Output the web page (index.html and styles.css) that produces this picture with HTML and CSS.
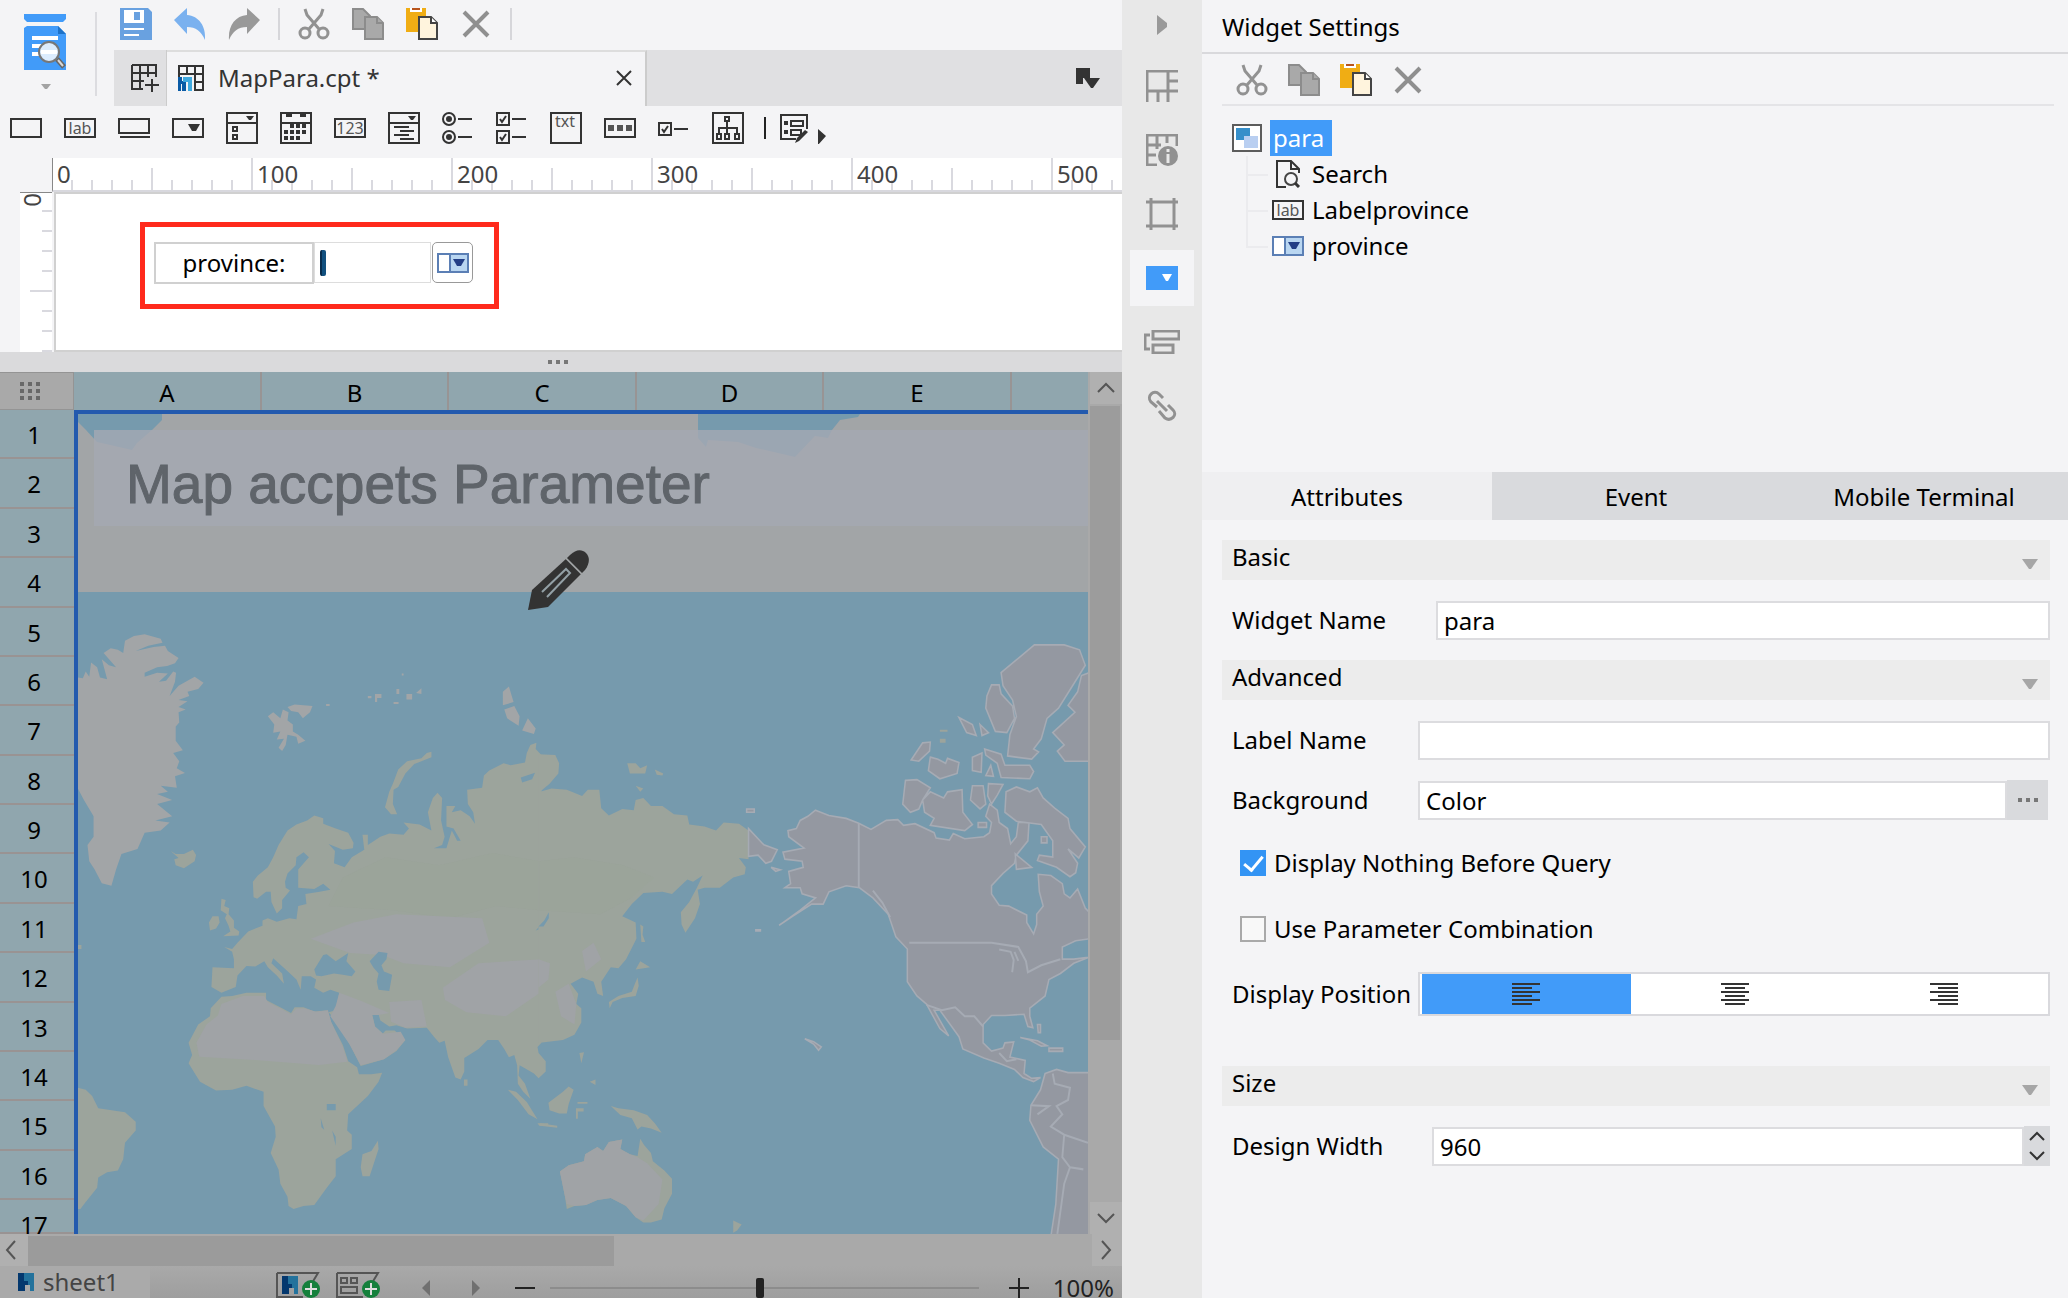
FILE: index.html
```html
<!DOCTYPE html>
<html lang="en">
<head>
<meta charset="utf-8">
<title>MapPara.cpt</title>
<link rel="stylesheet" href="styles.css">
</head>
<body>
<svg class="defs" aria-hidden="true">
  <symbol id="i-cut" viewBox="0 0 32 32"><g fill="none" stroke="#929292" stroke-width="3"><path d="M7 1l2 6 12 14M25 1l-2 6-12 14"/><circle cx="7" cy="25" r="5"/><circle cx="25" cy="25" r="5"/></g></symbol>
  <symbol id="i-copy" viewBox="0 0 32 32"><g fill="#a9a9a9" stroke="#8c8c8c" stroke-width="2"><path d="M1 1h10l7 7v13H1z"/><path d="M13 9h12l6 6v16H13z"/><path d="M25 9v6h6"/></g></symbol>
  <symbol id="i-paste" viewBox="0 0 32 32"><path d="M0 0h20v24H0z" fill="#f0ad14"/><path d="M4 0h12v4H4z" fill="#fff"/><path d="M6 0h8v2H6z" fill="#b8541c"/><path d="M13 9h12l6 6v16H13z" fill="#fff4dd" stroke="#444" stroke-width="2"/><path d="M25 9v6h6" fill="#fff" stroke="#444" stroke-width="2"/></symbol>
  <symbol id="i-del" viewBox="0 0 32 32"><path d="M4 4l24 24M28 4L4 28" stroke="#8f8f8f" stroke-width="4" fill="none"/></symbol>
  <symbol id="i-combo" viewBox="0 0 32 20"><path d="M1 1h30v18H1z" fill="#fff" stroke="#5b7fb5" stroke-width="2"/><path d="M13 2h17v16H13z" fill="#b9d6f1"/><path d="M13 1v18" stroke="#5b7fb5" stroke-width="2"/><path d="M16 6h12l-4 7h-4z" fill="#233e86"/></symbol>
  <symbol id="i-down" viewBox="0 0 16 10"><path d="M0 0h16L9 10H7z" fill="#a6a6a6"/></symbol>
</svg>

<div class="app">
  <main class="work">
    <header class="top">
      <button class="preview" aria-label="Preview">
        <svg width="44" height="80" viewBox="0 0 44 80"><path d="M1 0h42v5l-3 3H4L1 5z" fill="#419bf9"/><path d="M1 14l3-2h31l8 8v36H1z" fill="#419bf9"/><path d="M35 12l8 8h-8z" fill="#1d72c8"/><path d="M9 22h26v4H9zM9 30h12v4H9zM9 38h9v4H9z" fill="#fff"/><path d="M34 45l7 8" stroke="#666" stroke-width="5"/><path d="M35 46l5 6" stroke="#d8d8d8" stroke-width="2"/><circle cx="26" cy="38" r="10" fill="#dcecfd" stroke="#777" stroke-width="2"/><path d="M18 36h16v4H18z" fill="#fff"/><path d="M18 70h10l-4 5h-2z" fill="#a3a3a3"/></svg>
      </button>
      <div class="bars">
        <div class="tools">
          <button aria-label="Save"><svg width="32" height="32" viewBox="0 0 32 32"><path d="M0 0h28l4 4v28H0z" fill="#69a1e0"/><path d="M4 2h20v13H4z" fill="#fff"/><path d="M14 4h6v8h-6z" fill="#69a1e0"/><path d="M4 20h20v2H4zM4 26h15v2H4z" fill="#fff"/></svg></button>
          <button aria-label="Undo"><svg width="32" height="32" viewBox="0 0 32 32"><path d="M0 12L13 0v7c12 1 19 11 18 25-4-9-9-13-18-13v7z" fill="#7ab1ef"/></svg></button>
          <button aria-label="Redo"><svg width="32" height="32" viewBox="0 0 32 32"><path d="M32 12L19 0v7C7 8 0 18 1 32c4-9 9-13 18-13v7z" fill="#999"/></svg></button>
          <i class="sep"></i>
          <button aria-label="Cut"><svg width="32" height="32"><use href="#i-cut"/></svg></button>
          <button aria-label="Copy"><svg width="32" height="32"><use href="#i-copy"/></svg></button>
          <button aria-label="Paste"><svg width="32" height="32"><use href="#i-paste"/></svg></button>
          <button aria-label="Delete"><svg width="32" height="32"><use href="#i-del"/></svg></button>
          <i class="sep"></i>
        </div>
        <div class="docs">
          <button class="newdoc" aria-label="New"><svg width="30" height="28" viewBox="0 0 30 28"><path d="M1 1h24v12M1 1v24h11M1 9h24M1 17h12M9 1v24M17 1v12M21 15v13M14 21h14" fill="none" stroke="#333" stroke-width="2"/></svg></button>
          <div class="doc">
            <svg width="26" height="26" viewBox="0 0 26 26"><path d="M1 12V1h24v24h-8V1M9 1v8M1 9h24M17 17h8" fill="none" stroke="#333" stroke-width="2"/><path d="M0 12h4v4h4v10H4v-7H3v7H0z" fill="#0a5ba6"/><path d="M5 12h9v14h-4V17H5z" fill="#3fa9df"/></svg>
            <span class="docname">MapPara.cpt *</span>
            <button aria-label="Close"><svg width="16" height="16" viewBox="0 0 16 16"><path d="M1 1l14 14M15 1L1 15" stroke="#333" stroke-width="2"/></svg></button>
          </div>
          <button class="doclist" aria-label="Open documents"><svg width="24" height="20" viewBox="0 0 24 20"><path d="M0 0h14v10h-7v6H0z" fill="#333"/><path d="M8 10h16l-7 10h-2z" fill="#333"/></svg></button>
        </div>
      </div>
    </header>

    <div class="palette">
      <button aria-label="Text box"><svg viewBox="0 0 32 32"><path d="M1 7h30v18H1z"/></svg></button>
      <button aria-label="Label"><svg viewBox="0 0 32 32"><path d="M1 7h30v18H1z"/><text x="16" y="22">lab</text></svg></button>
      <button aria-label="Button"><svg viewBox="0 0 32 32"><path d="M1 7h30v14H1zM2 25h30"/></svg></button>
      <button aria-label="Drop-down"><svg viewBox="0 0 32 32"><path d="M1 7h30v18H1z"/><path class="f" d="M16 12h12l-4 7h-4z"/></svg></button>
      <button aria-label="Combo check box"><svg viewBox="0 0 32 32"><path d="M1 1h30v30H1zM1 11h30M7 15h4v4H7zM7 23h4v4H7z"/><path class="f" d="M20 4h8l-3 4h-2z"/></svg></button>
      <button aria-label="Date"><svg viewBox="0 0 32 32"><path d="M1 1h30v30H1zM1 11h30"/><path d="M6 3h6M20 3h6M10 14h4M16 14h4M22 14h4M4 20h4M10 20h4M16 20h4M22 20h4M4 26h4M10 26h4M16 26h4" stroke-width="4"/></svg></button>
      <button aria-label="Number"><svg viewBox="0 0 32 32"><path d="M1 7h30v18H1z"/><text x="16" y="22">123</text></svg></button>
      <button aria-label="Tree drop-down"><svg viewBox="0 0 32 32"><path d="M1 1h30v30H1zM1 11h30M6 15h15M12 19h14M6 23h15M12 27h14"/><path class="f" d="M20 4h8l-3 4h-2z"/></svg></button>
      <button aria-label="Radio group"><svg viewBox="0 0 32 32"><circle cx="7" cy="7" r="6"/><circle cx="7" cy="25" r="6"/><circle class="f" cx="7" cy="7" r="3"/><circle class="f" cx="7" cy="25" r="3"/><path d="M16 7h14M16 25h14"/></svg></button>
      <button aria-label="Check box group"><svg viewBox="0 0 32 32"><path d="M1 1h12v12H1zM1 19h12v12H1zM4 7l2 3 4-6M4 25l2 3 4-6M16 7h14M16 25h14"/></svg></button>
      <button aria-label="Text area"><svg viewBox="0 0 32 32"><path d="M1 1h30v30H1z"/><text x="15" y="15">txt</text></svg></button>
      <button aria-label="Password"><svg viewBox="0 0 32 32"><path d="M1 7h30v18H1z"/><path d="M4 16h6M13 16h6M22 16h6" stroke-width="6" stroke="#555"/></svg></button>
      <button aria-label="Check box"><svg viewBox="0 0 32 32"><path d="M1 11h12v12H1zM4 17l2 3 4-6M16 17h14"/></svg></button>
      <button aria-label="Tree"><svg viewBox="0 0 32 32"><path d="M1 1h30v30H1zM13 5h4v4h-4zM15 9v14M7 22v-6h18v6M5 22h4v5H5zM13 22h4v5h-4zM23 22h4v5h-4z"/></svg></button>
      <i class="bar"></i>
      <button class="custom" aria-label="Custom widget"><svg viewBox="0 0 46 32"><path d="M16 27H1V3h26v14M11 9h12v5H11zM11 18h10v5H11z"/><path class="f" d="M4 9h4v4H4zM4 18h4v4H4zM38 17l8 7-8 9zM15 31l2-5 8-8 3 2-9 9z"/></svg></button>
    </div>

    <section class="para">
      <div class="hruler"><span>0</span><span>100</span><span>200</span><span>300</span><span>400</span><span>500</span></div>
      <div class="vruler"><span>0</span></div>
      <div class="canvas">
        <div class="mark">
          <label for="prov">province:</label>
          <div class="provbox"><input id="prov"><i class="caret"></i></div>
          <button aria-label="Open list"><svg width="32" height="20"><use href="#i-combo"/></svg></button>
        </div>
      </div>
    </section>
    <div class="split"><i></i><i></i><i></i></div>

    <section class="sheet">
      <div class="corner"><svg width="20" height="18" viewBox="0 0 20 18"><path d="M2 0v18M10 0v18M18 0v18" stroke="#686868" stroke-width="4" stroke-dasharray="4 3"/></svg></div>
      <div class="cols"><span>A</span><span>B</span><span>C</span><span>D</span><span>E</span><span></span></div>
      <div class="rows"><span>1</span><span>2</span><span>3</span><span>4</span><span>5</span><span>6</span><span>7</span><span>8</span><span>9</span><span>10</span><span>11</span><span>12</span><span>13</span><span>14</span><span>15</span><span>16</span><span>17</span></div>
      <div class="map">
        <svg class="world" viewBox="78 414 1010 820" preserveAspectRatio="xMinYMin slice">
          <path class="ice" d="M78 414h1010v178H78z"/>
          <path class="sea" d="M78 414h84v6l-10 10-15 13-5 7-35-8-11-12-8-8zM698 414h162l-2 3-18 3-8 10-4 8-13-2-20 21-17-4-22-5-18-6-30-2-2 7-8-9z"/>
          <g transform="translate(0 600) scale(.35714 .40816)">
            <path class="ice" d="M218 190L232 192 240 175 250 188 255 153 272 165 280 190 300 194 285 145 305 160 325 165 290 130 310 118 330 122 345 130 350 100 375 88 405 84 450 95 455 105 415 112 380 125 430 115 462 112 470 125 500 142 490 155 468 162 440 165 405 178 405 188 440 178 470 180 445 200 465 198 485 175 493 178 490 200 475 235 500 210 545 188 570 203 555 218 525 225 530 235 500 245 525 248 500 262 520 268 500 275 502 300 492 310 492 345 512 368 485 375 502 395 495 412 518 424 490 432 495 460 450 455 470 470 440 475 482 490 440 500 482 530 435 540 475 545 450 565 405 570 385 610 340 622 325 660 318 682 312 700 285 694 265 660 250 640 245 600 262 580 262 530 235 490 218 462Z"/>
            <path class="ice" d="M750 285L765 275 785 290 792 268 808 275 805 295 820 305 820 322 835 330 855 345 835 352 830 335 805 330 800 355 790 370 780 362 795 340 775 342 785 322 765 325 768 305ZM805 262L825 256 875 260 868 275 848 290 835 275 815 272ZM1030 235h10v6h-10zM1050 230h18v10h-12v10h-6zM1110 218h8v12h-8zM1138 230h16v14h-16zM1165 228l15-12v14zM1125 180h5v5h-5zM1102 250h14v5h-14zM1408 225L1425 212 1438 250 1408 258ZM1412 268L1440 260 1455 285 1452 308 1420 290ZM1462 320L1478 290 1500 315 1495 328ZM913 255h10v5h-10z"/>
            <path class="land" d="M1208 372L1208 385 1160 402 1135 425 1115 458 1102 465 1100 500 1112 525 1095 525 1078 508 1090 470 1100 450 1115 415 1140 395 1180 388 1195 375ZM478 615L492 622 515 622 540 612 549 625 545 640 515 657 492 650 488 635 500 632ZM620 732L632 735 628 750 642 755 640 770 655 785 655 803 670 812 668 822 625 824 645 812 640 798 630 780 635 770 618 760ZM585 790L595 775 612 775 615 790 605 805 588 810ZM218 845h10v10h-10z"/>
            <path class="land" d="M628 850L650 855 665 840 695 812 735 798 735 785 750 780 775 788 810 780 830 782 835 750 858 745 855 720 895 715 925 710 905 695 880 708 835 705 835 660 865 630 850 618 830 630 828 650 805 670 798 690 800 705 812 712 790 735 790 755 775 768 760 740 758 715 745 715 720 732 710 728 708 690 722 675 750 655 765 630 780 600 805 565 830 550 860 540 880 528 905 535 905 548 940 560 975 570 990 595 988 608 960 612 920 598 938 615 935 645 965 655 985 630 1020 612 1015 575 1030 575 1030 600 1065 580 1090 572 1130 575 1145 560 1130 545 1175 550 1208 565 1198 520 1212 485 1225 472 1238 485 1235 540 1245 580 1238 600 1215 608 1250 608 1265 565 1280 590 1290 590 1270 560 1250 555 1250 505 1275 505 1265 520 1290 515 1315 530 1330 548 1325 520 1310 500 1308 465 1350 460 1355 430 1370 418 1410 400 1430 405 1470 398 1475 375 1485 355 1502 350 1500 365 1516 380 1516 1085 1505 1095 1508 1110 1528 1130 1528 1155 1508 1172 1495 1160 1455 1140 1452 1165 1470 1185 1485 1222 1465 1205 1450 1185 1448 1140 1440 1115 1425 1120 1412 1100 1395 1078 1365 1078 1340 1100 1300 1122 1300 1155 1290 1175 1275 1170 1255 1120 1245 1080 1230 1085 1215 1070 1195 1048 1140 1050 1110 1042 1090 1045 1065 1030 1060 1015 1042 1015 1050 1045 1072 1062 1080 1055 1105 1055 1135 1078 1110 1105 1075 1125 1010 1142 980 1090 950 1040 920 1010 940 1005 950 962 925 955 905 962 880 950 885 930 870 922 845 922 842 955 830 930 800 905 765 878 760 890 790 915 795 940 775 920 750 900 740 885 715 898 690 897 665 920 660 948 620 962 592 948 595 900 655 902 655 880 650 862Z"/>
            <path class="green" d="M960 680l120-50 150 20 150-30 130 20v120l-120-10-130 30-160-20-180-10z"/>
            <path class="dry" d="M950 962l60 20 80 30-30 5-18 0 8 28 22 18 50-5 13 20-25 25-35 22-65 15-30-50-55-70 15-25zM870 830l120-40 120-20 240 10 20 60-110 60-130-10-60-20-90-5zM1240 950l100-60 176-10v80l-100 60-110-10-60-30zM1090 985l90-5 15 65-60 3-40-15z"/>
            <path class="sea" d="M880 905L905 870 915 868 940 885 975 865 970 885 995 910 985 922 960 918 935 915 900 922 885 920ZM1035 885L1060 862 1085 865 1082 880 1068 895 1075 910 1098 918 1090 958 1060 955 1055 935 1060 915 1045 900ZM1500 810L1520 790 1540 768 1535 785 1515 805ZM1458 435l40-12-8 16-28 8z"/>
            <path class="land" d="M620 972L650 970 690 962 745 962 745 980 790 1000 815 1012 825 998 850 998 880 1008 918 1005 925 1030 960 1090 975 1130 1000 1145 1005 1162 1040 1162 1070 1158 1060 1180 1030 1215 975 1260 972 1300 985 1310 985 1345 940 1370 940 1412 915 1440 880 1482 850 1485 822 1492 808 1485 805 1462 785 1430 780 1395 758 1355 772 1315 770 1290 738 1240 738 1205 690 1190 650 1200 605 1202 560 1180 528 1135 538 1115 528 1085 555 1040 588 1020 590 1000Z"/>
            <path class="dry" d="M620 990l60-20h60l10 15 40 18 25 12 15-14h25l30 8 33-4 10 30 32 60 13 36-80 8-180-12-155-8-8-34 28-45 32-22z"/>
            <path class="sea" d="M915 1235h25v15h-25zM898 1270l10 28-8-6zM930 1300l10 15v22z"/>
            <path class="land" d="M1058 1325L1060 1345 1035 1412 1015 1412 1010 1390 1015 1358 1040 1350ZM218 1195L240 1200 258 1215 275 1245 350 1255 380 1278 380 1300 350 1330 345 1370 330 1398 300 1402 275 1415 272 1440 240 1475 225 1492 218 1492ZM1299 1175h10v15h-10zM1422 1200L1445 1205 1475 1230 1505 1272 1480 1260 1450 1225ZM1505 1282l30 0 0 6-25 0z"/>
          </g>
          <g transform="translate(540 600) scale(.38265 .40816)">
            <path class="land" d="M-4 378L40 380 50 400 48 425 25 450 0 470 30 462 70 465 110 480 125 465 155 465 160 510 180 528 215 512 245 515 250 490 270 485 290 505 320 505 350 525 385 528 390 550 430 555 460 565 480 545 520 548 545 565 545 635 520 632 538 655 535 672 505 680 470 705 430 705 412 710 418 745 405 780 380 815 370 795 368 765 390 740 410 705 425 675 400 690 385 685 345 720 320 715 270 718 240 745 215 775 250 790 252 830 225 880 205 902 185 900 160 935 165 970 150 965 140 935 110 925 80 940 100 965 95 990 108 1000 108 1035 90 1065 60 1078 0 1085 -4 1085Z"/>
            <path class="green" d="M-2 640l90-10 130 20 80 30-60 50-80 40-160-10z"/>
            <path class="dry" d="M40 960l35-20 20 50-5 50-35-20zM110 860l30-20 20 40-40 30zM-4 880l30 10-4 40-26 20z"/>
            <path class="sea" d="M-4 800l15-15 12-20v15l-14 20z"/>
            <path class="land" d="M262 795L270 800 268 820 275 838 265 838ZM262 885L288 900 250 905ZM255 925L258 945 250 970 215 975 190 985 182 1000 180 985 205 970 240 960 248 940ZM228 400L250 400 262 412 280 405 275 425 235 425ZM300 415L322 425 320 430 305 428ZM250 455L270 462 262 470ZM103 1110L115 1108 108 1135ZM130 1180L145 1175 145 1188ZM22 1232L60 1205 75 1192 88 1200 75 1235 70 1258 50 1258 25 1250ZM94 1245h20v8h-15v18h-5zM98 1230h26v4h-26zM185 1240L205 1245 245 1250 280 1262 300 1282 318 1305 290 1295 265 1290 255 1297 240 1270 210 1262ZM0 1282L45 1288 45 1293 0 1288ZM505 1520L527 1530 515 1545 505 1550ZM1045 318h20v5h-20zM1045 340h15v10h-15z"/>
            <path class="land" d="M52 1400L75 1385 115 1375 118 1358 150 1340 165 1350 180 1328 215 1322 210 1345 235 1358 255 1362 262 1320 272 1335 290 1355 295 1375 325 1398 345 1418 345 1455 325 1490 318 1518 290 1525 270 1525 250 1512 225 1485 185 1465 150 1470 120 1482 90 1485 70 1492 65 1460Z"/>
            <path class="dry" d="M52 1400L75 1385 115 1375 118 1358 150 1340 165 1350 180 1328 215 1322 210 1345 235 1358 255 1365 280 1380 320 1420 310 1480 270 1520 250 1512 225 1485 185 1465 150 1470 120 1482 90 1485 70 1480 65 1460Z"/>
            <path class="us" d="M545 560L585 600 620 612 605 640 590 645 570 625 545 628ZM540 512h20v8h-20zM604 655l24 6-12 4zM692 1075L715 1082 735 1095 728 1103 715 1088ZM564 808h12v3h-12zM720 515L755 528 800 535 833 547 865 562 905 540 935 538 950 552 980 548 1030 570 1035 583 1070 588 1080 572 1110 585 1160 580 1175 570 1180 545 1165 530 1175 500 1195 515 1200 545 1222 560 1230 597 1245 580 1250 545 1278 545 1275 590 1245 625 1240 645 1210 670 1180 700 1180 720 1200 748 1225 750 1272 772 1272 790 1290 818 1298 795 1298 770 1315 750 1305 715 1302 672 1335 675 1365 695 1370 720 1385 730 1405 708 1425 755 1436 765 1436 830 1400 835 1365 850 1365 880 1395 880 1436 875 1395 890 1360 915 1330 930 1320 970 1280 1000 1280 1020 1288 1048 1275 1045 1265 1015 1215 1018 1180 1018 1158 1040 1158 1085 1180 1105 1210 1098 1215 1085 1238 1083 1228 1120 1268 1128 1265 1160 1285 1172 1308 1170 1290 1180 1262 1170 1240 1150 1200 1135 1160 1122 1105 1100 1095 1070 1045 1005 1030 1005 1068 1068 1045 1050 1010 990 985 970 960 935 960 855 930 825 910 770 870 730 835 705 800 700 755 715 740 745 710 745 660 775 625 797 680 760 720 730 685 720 680 705 640 705 655 695 650 665 688 655 685 640 640 635 635 618 690 608 650 580 648 565 670 560 680 540 700 530Z"/>
            <path class="us" d="M1292 110L1370 110 1410 122 1425 160 1395 205 1355 265 1325 290 1310 340 1290 365 1303 372 1285 390 1222 382 1228 330 1245 285 1235 245 1210 210 1205 178ZM1180 208L1200 208 1205 230 1235 260 1240 290 1220 325 1190 322 1165 265 1168 235ZM1436 178L1415 185 1405 225 1380 258 1398 275 1340 325 1370 355 1352 370 1372 395 1436 395ZM1000 350L1020 348 1018 370 990 395 970 392ZM1020 385L1040 390 1060 400 1065 388 1095 398 1090 425 1045 438 1015 418ZM1095 288L1130 305 1140 332 1115 325ZM1150 305L1172 325 1155 332ZM1130 385L1155 375 1153 422 1130 418ZM1165 430L1178 405 1185 432ZM1162 365L1205 378 1215 405 1280 405 1290 420 1280 438 1205 435 1195 400 1165 380ZM955 442L985 440 1020 460 1000 490 990 512 968 520 948 500ZM1020 470L1055 485 1065 470 1103 465 1105 520 1130 550 1110 565 1020 552 1030 535 1005 520 1000 490ZM1130 455L1158 455 1165 500 1150 512 1125 490ZM1172 450L1210 452 1195 478 1180 500 1170 480ZM1218 470L1245 458 1280 470 1300 460 1315 485 1345 510 1380 535 1385 560 1425 605 1408 632 1380 610 1405 645 1400 668 1385 678 1350 655 1300 638 1305 625 1340 630 1340 590 1310 550 1245 542 1215 520ZM1242 622L1285 655 1245 660ZM1310 580h15v15h-15zM1145 545h22v12h-22z"/>
            <path class="us" d="M1320 1160L1350 1150 1380 1158 1436 1158 1436 1560 1335 1560 1348 1480 1355 1370 1315 1340 1280 1275 1283 1238 1308 1200ZM1255 1072L1300 1080 1325 1092 1310 1093 1280 1078ZM1330 1098h36v8h-36zM1300 1040h8v20h-6z"/>
            <path class="sea" d="M1405 845h27v25h-22z"/>
            <path class="edge" d="M833 547V705M965 840H1180L1250 850 1270 885 1275 912 1310 895 1360 880M1200 856l30 6 8 20-4 30M1240 862l10 22M1010 992L1050 1005 1085 998 1110 1020 1135 1020 1158 1045M870 712l25 30 20 35M1340 1160L1345 1185 1385 1195 1380 1225 1350 1240 1365 1260 1335 1290 1370 1310 1432 1330M1370 1310L1365 1365 1385 1390 1420 1395M1283 1238L1330 1240 1300 1260M1385 1390L1370 1430 1352 1553M1200 1110l20 20 25-5"/>
          </g>
        </svg>
        <h1 class="maptitle">Map accpets Parameter</h1>
        <svg class="pen" width="62" height="62" viewBox="0 0 62 62"><path d="M0 60l4-20L39 8l15 15-34 34z" fill="#333"/><path d="M14 42l24-23 4 4-23 24" fill="none" stroke="#93a0a6" stroke-width="2"/><path d="M37 7l18 18" stroke="#a2a5a7" stroke-width="2"/><path d="M42 5c6-6 12-6 16-2s4 10-1 17l-3 3-15-15z" fill="#333"/></svg>
      </div>
      <div class="vscroll">
        <button aria-label="Scroll up"><svg width="18" height="12" viewBox="0 0 18 12"><path d="M1 10l8-8 8 8"/></svg></button>
        <div class="vthumb"></div>
        <button aria-label="Scroll down"><svg width="18" height="12" viewBox="0 0 18 12"><path d="M1 2l8 8 8-8"/></svg></button>
      </div>
    </section>
    <div class="hscroll">
      <button aria-label="Scroll left"><svg width="12" height="20" viewBox="0 0 12 20"><path d="M10 1l-8 9 8 9"/></svg></button>
      <div class="hthumb"></div>
      <button aria-label="Scroll right"><svg width="12" height="20" viewBox="0 0 12 20"><path d="M2 1l8 9-8 9"/></svg></button>
    </div>
    <footer class="status">
      <button class="sheettab"><svg width="16" height="18" viewBox="0 0 16 18"><path d="M0 0h6v8h4v4H7v6H0z" fill="#04386e"/><path d="M6 0h10v18h-4v-6h-2V8H6z" fill="#23729c"/></svg>sheet1</button>
      <button class="add1" aria-label="Add sheet"><svg width="44" height="26" viewBox="0 0 44 26"><path d="M1 1h41l-6 10M1 1v24h26" fill="none" stroke="#555" stroke-width="2"/><path d="M6 4h6v8h4v4h-3v6H6z" fill="#04386e"/><path d="M12 4h10v18h-4v-6h-2v-4h-4z" fill="#23729c"/><circle cx="35" cy="17" r="9" fill="#15803c"/><path d="M29 17h12M35 11v12" stroke="#ddd" stroke-width="2"/></svg></button>
      <button class="add2" aria-label="Add form"><svg width="44" height="26" viewBox="0 0 44 26"><path d="M1 1h41l-6 10M1 1v24h26M5 6h6v5H5zM15 6h6v5h-6zM5 15h16v6H5z" fill="none" stroke="#555" stroke-width="2"/><circle cx="35" cy="17" r="9" fill="#15803c"/><path d="M29 17h12M35 11v12" stroke="#ddd" stroke-width="2"/></svg></button>
      <button class="prev" aria-label="Previous sheet"><svg width="8" height="16" viewBox="0 0 8 16"><path d="M8 0v16L0 8z" fill="#707070"/></svg></button>
      <button class="next" aria-label="Next sheet"><svg width="8" height="16" viewBox="0 0 8 16"><path d="M0 0v16l8-8z" fill="#707070"/></svg></button>
      <button class="minus" aria-label="Zoom out"><svg width="20" height="20" viewBox="0 0 20 20"><path d="M0 10h20" stroke="#222" stroke-width="2"/></svg></button>
      <input type="range" min="0" max="100" value="49" aria-label="Zoom">
      <button class="plus" aria-label="Zoom in"><svg width="20" height="20" viewBox="0 0 20 20"><path d="M0 10h20M10 0v20" stroke="#222" stroke-width="2"/></svg></button>
      <span class="pct">100%</span>
    </footer>
  </main>

  <nav class="rail">
    <button class="fold" aria-label="Collapse"><svg width="10" height="20" viewBox="0 0 10 20"><path d="M0 0l10 8v4L0 20z" fill="#999"/></svg></button>
    <button aria-label="Cell element"><svg width="32" height="32" viewBox="0 0 32 32"><path d="M1 32V1h31M1 21h31M22 1v31M22 11h10M12 21v11"/></svg></button>
    <button aria-label="Cell attributes"><svg width="32" height="32" viewBox="0 0 32 32"><path d="M11 31H1V1h30v11M1 11h14M11 1v14M1 21h9M21 1v8M1 31v-30"/><circle cx="22" cy="22" r="10" fill="#919191" stroke="none"/><path d="M22 15v3M22 20v9" stroke="#e8e8e8" stroke-width="3"/></svg></button>
    <button aria-label="Float element"><svg width="32" height="32" viewBox="0 0 32 32"><path d="M0 4h32M0 28h32M5 0v32M28 0v32"/></svg></button>
    <button class="on" aria-label="Widget settings"><svg width="32" height="24" viewBox="0 0 32 24"><path d="M0 0h32v24H0z" fill="#419bf9" stroke="none"/><path d="M16 8h10l-4 7h-2z" fill="#fff" stroke="none"/></svg></button>
    <button aria-label="Condition attributes"><svg width="36" height="24" viewBox="0 0 36 24"><path d="M9 1h26v8H9zM9 15h20v8H9zM6 5H1v14h5"/></svg></button>
    <button aria-label="Hyperlink"><svg width="32" height="32" viewBox="0 0 32 32"><path d="M11 17l-6-5c-5-6 3-13 8-8l4 4"/><path d="M22 15l5 5c5 5-2 12-8 8l-6-7"/><path d="M11 11l10 10"/></svg></button>
  </nav>

  <aside class="side">
    <h2>Widget Settings</h2>
    <div class="sidetools">
      <button aria-label="Cut"><svg width="32" height="32"><use href="#i-cut"/></svg></button>
      <button aria-label="Copy"><svg width="32" height="32"><use href="#i-copy"/></svg></button>
      <button aria-label="Paste"><svg width="32" height="32"><use href="#i-paste"/></svg></button>
      <button aria-label="Delete"><svg width="32" height="32"><use href="#i-del"/></svg></button>
    </div>
    <div class="tree">
      <div class="root"><svg width="30" height="28" viewBox="0 0 30 28"><path d="M1 1h28v26H1z" fill="#fff" stroke="#5c5c5c" stroke-width="2"/><path d="M4 4h14v12H4z" fill="#368fca"/><path d="M12 12h14v12H12z" fill="#b9cff1"/></svg><span>para</span></div>
      <ul>
        <li><svg width="32" height="28" viewBox="0 0 32 28"><path d="M14 27H5V1h14l8 8v4M19 1v8h8" fill="none" stroke="#333" stroke-width="2"/><circle cx="19" cy="19" r="6" fill="none" stroke="#444" stroke-width="2"/><path d="M23 23l4 4" stroke="#333" stroke-width="3"/></svg>Search</li>
        <li><svg width="32" height="20" viewBox="0 0 32 20"><path d="M1 1h30v18H1z" fill="none" stroke="#333" stroke-width="2"/><text x="16" y="16" font-size="16" text-anchor="middle" fill="#555">lab</text></svg>Labelprovince</li>
        <li><svg width="32" height="20"><use href="#i-combo"/></svg>province</li>
      </ul>
    </div>
    <div class="tabs"><button class="on">Attributes</button><button>Event</button><button>Mobile Terminal</button></div>
    <form class="form">
      <h3>Basic<svg width="16" height="10"><use href="#i-down"/></svg></h3>
      <div class="row w1"><label for="wn">Widget Name</label><input id="wn" value="para"></div>
      <h3>Advanced<svg width="16" height="10"><use href="#i-down"/></svg></h3>
      <div class="row w2"><label for="ln">Label Name</label><input id="ln" class="wide"></div>
      <div class="row w2"><label for="bg">Background</label><input id="bg" value="Color"><button type="button" class="more" aria-label="Choose background"><i></i><i></i><i></i></button></div>
      <label class="check"><input type="checkbox" checked>Display Nothing Before Query</label>
      <label class="check"><input type="checkbox">Use Parameter Combination</label>
      <div class="row pos w2"><span>Display Position</span>
        <div class="seg">
          <label><input type="radio" name="pos" aria-label="Left" checked><svg width="28" height="22" viewBox="0 0 28 22"><path d="M0 1h28M0 5h20M0 9h28M0 13h20M0 17h28M0 21h20"/></svg></label>
          <label><input type="radio" name="pos" aria-label="Center"><svg width="28" height="22" viewBox="0 0 28 22"><path d="M0 1h28M4 5h20M0 9h28M4 13h20M0 17h28M4 21h20"/></svg></label>
          <label><input type="radio" name="pos" aria-label="Right"><svg width="28" height="22" viewBox="0 0 28 22"><path d="M0 1h28M8 5h20M0 9h28M8 13h20M0 17h28M8 21h20"/></svg></label>
        </div>
      </div>
      <h3>Size<svg width="16" height="10"><use href="#i-down"/></svg></h3>
      <div class="row w3"><label for="dw">Design Width</label><input id="dw" value="960">
        <div class="spin"><button type="button" aria-label="Increase"><svg width="16" height="10" viewBox="0 0 16 10"><path d="M1 9l7-7 7 7"/></svg></button><button type="button" aria-label="Decrease"><svg width="16" height="10" viewBox="0 0 16 10"><path d="M1 1l7 7 7-7"/></svg></button></div>
      </div>
    </form>
  </aside>
</div>
</body>
</html>
```
FILE: styles.css
```css
* { box-sizing: border-box; }
body { margin: 0; font: 24px/32px "Noto Sans", "Open Sans", sans-serif; color: #000; background: #f4f4f6; }
button { border: 0; padding: 0; margin: 0; background: none; font: inherit; color: inherit; display: flex; align-items: center; justify-content: center; }
input { font: inherit; color: inherit; margin: 0; }
h1, h2, h3, ul { margin: 0; padding: 0; font-weight: 400; }
svg { display: block; flex: none; }
.defs { position: absolute; width: 0; height: 0; }
.app { display: grid; grid-template-columns: minmax(0, 1122fr) 80px minmax(0, 866fr); height: 100vh; overflow: hidden; }
.work { display: flex; flex-direction: column; min-width: 0; min-height: 0; }

/* title bar and document tabs */
.top { display: flex; height: 106px; }
.preview { width: 97px; padding-left: 23px; padding-top: 14px; justify-content: flex-start; align-items: flex-start; position: relative; }
.preview::after { content: ""; width: 2px; height: 84px; background: #dcdce0; position: absolute; right: 0; top: 12px; }
.bars { flex: 1; padding-left: 17px; }
.tools { display: flex; align-items: center; gap: 22px; height: 50px; padding: 0 6px 2px; }
.sep { width: 2px; height: 32px; background: #d6d6da; margin: 0 -4px; }
.docs { display: flex; height: 56px; background: #e0e0e2; }
.newdoc { width: 53px; padding-left: 12px; border-right: 1px solid #ccc; }
.doc { width: 480px; display: flex; align-items: center; background: #f4f4f6; border-top: 2px solid #ddd; border-right: 2px solid #ccc; padding: 0 13px 2px 11px; gap: 14px; color: #333; }
.docname { flex: 1; }
.doclist { margin-left: auto; padding-right: 22px; }

/* widget palette */
.palette { height: 52px; display: flex; gap: 22px; align-items: flex-start; padding: 6px 0 0 10px; }
.palette svg { width: 32px; height: 32px; fill: none; stroke: #333; stroke-width: 2; }
.palette .custom svg { width: 46px; }
.palette text { fill: #555; stroke: none; font-size: 16px; text-anchor: middle; }
.palette .f { fill: #333; stroke: none; }
.bar { width: 2px; height: 22px; background: #222; margin: 5px -8px 0 -2px; }

/* parameter panel with rulers */
.para { display: grid; grid-template-columns: 32px minmax(0, 1fr); grid-template-rows: 34px 160px; padding-left: 20px; color: #444; }
.hruler { grid-column: 2; display: flex; overflow: hidden; border-left: 1px solid #888; border-bottom: 2px solid #d8d8de; line-height: 32px;
  background: linear-gradient(90deg, #d9d9df 2px, transparent 2px) -2px 100% / 200px 32px repeat-x, linear-gradient(90deg, #d9d9df 2px, transparent 2px) -2px 100% / 100px 22px repeat-x, linear-gradient(90deg, #d9d9df 2px, transparent 2px) -2px 100% / 20px 10px repeat-x, #fff; }
.hruler span { flex: none; width: 200px; padding-left: 4px; }
.vruler { grid-column: 1; border-top: 1px solid #888;
  background: linear-gradient(#d9d9df 2px, transparent 2px) 100% 97px / 22px 100px no-repeat, linear-gradient(#d9d9df 2px, transparent 2px) 100% -3px / 10px 20px repeat-y, #fff; }
.vruler span { writing-mode: vertical-rl; transform: rotate(180deg); line-height: 24px; display: block; }
.canvas { background: #fff; border: 2px solid #d0d0d0; border-right: 0; padding: 28px 0 0 84px; margin-left: 2px; }
.mark { display: flex; width: 359px; height: 87px; border: 5px solid #ff2a1c; padding: 15px 9px; color: #000; }
.mark label { width: 160px; height: 42px; border: 2px solid #d0d0d0; text-align: center; line-height: 38px; }
.provbox { position: relative; width: 117px; height: 41px; }
.provbox input { width: 100%; height: 100%; border: 1px solid #ddd; background: #fff; }
.caret { position: absolute; left: 6px; top: 8px; width: 6px; height: 26px; border-radius: 2px; background: #11507f; border-left: 2px solid #082c4c; }
.mark button { width: 41px; height: 41px; border: 1px solid #999; border-radius: 5px; margin-left: 1px; }
.split { height: 20px; flex: none; background: #dadadc; display: flex; gap: 4px; align-items: center; justify-content: center; padding-right: 6px; }
.split i { width: 4px; height: 4px; background: #777; }

/* spreadsheet */
.sheet { flex: 1; min-height: 0; display: grid; grid-template-columns: 74px minmax(0, 1fr) 34px; grid-template-rows: 38px minmax(0, 1fr); background: #a9a9a9; }
.corner { border: 1px solid #949494; border-left: 0; display: grid; place-items: center; padding-right: 14px; }
.cols { display: grid; grid-template-columns: 188px 187px 188px 187px 188px 1fr; background: #90a6ae; text-align: center; line-height: 42px; overflow: hidden; }
.cols span { border-right: 2px solid #989494; }
.cols span:last-child { border: 0; }
.rows { display: grid; grid-template-rows: repeat(16, minmax(0, 1fr)) 34px; background: #90a6ae; text-align: center; overflow: hidden; }
.rows span { border-bottom: 2px solid #999393; padding: 9px 6px 0 0; }
.map { position: relative; border: solid #235aae; border-width: 4px 0 0 4px; background: #769aad; overflow: hidden; padding: 16px 0 0 16px; }
.world { position: absolute; left: 0; top: 0; width: 100%; height: 100%; }
.maptitle { position: relative; height: 96px; padding-left: 32px; font: 55px/108px "Liberation Sans", Arial, sans-serif; color: #5f646a; -webkit-text-stroke: 1px #5f646a; background: rgba(165, 169, 179, .8); white-space: nowrap; }
.pen { position: absolute; left: 450px; top: 136px; }
.ice { fill: #a2a5a7; }
.sea { fill: #769aad; }
.land { fill: #9ca49c; }
.green { fill: #99a498; }
.dry { fill: #a0a3a6; }
.green { opacity: .5; }
.us { fill: #9498a1; stroke: #a6abb4; stroke-width: 4; }
.edge { fill: none; stroke: #a6abb4; stroke-width: 5; }
.vscroll { grid-column: 3; grid-row: 1 / 3; padding-left: 2px; display: flex; flex-direction: column; justify-content: space-between; }
.vscroll button, .hscroll button { background: #b0b0b0; height: 32px; flex: none; }
.vscroll path, .hscroll path { fill: none; stroke: #555; stroke-width: 2; }
.vthumb { flex: 0 0 634px; margin: 2px 2px auto 0; background: #9c9c9c; }
.hscroll { height: 32px; flex: none; background: #a9a9a9; display: flex; }
.hscroll button { width: 28px; padding-right: 6px; }
.hscroll button:last-child { width: 30px; margin-left: auto; padding-right: 2px; }
.hthumb { width: 586px; margin: 2px 0 0; background: #9b9b9b; }
.status { height: 32px; flex: none; display: flex; align-items: center; background: linear-gradient(#a9a9a9, #9e9e9e); padding-right: 8px; overflow: hidden; }
.sheettab { width: 150px; height: 32px; gap: 9px; justify-content: flex-start; padding-left: 18px; background: #aaa; color: #444; line-height: 32px; }
.add1 { margin-left: 126px; padding-top: 6px; }
.add2 { margin-left: 16px; padding-top: 6px; }
.prev { margin: 12px 0 0 42px; }
.next { margin: 12px 0 0 42px; }
.minus { margin: 12px 0 0 35px; }
.plus { margin: 12px 0 0 30px; }
.pct { margin: 12px 0 0 24px; color: #222; }
.status input { flex: 1; min-width: 0; height: 20px; margin: 12px 0 0 15px; appearance: none; background: linear-gradient(#8c8c8c, #8c8c8c) 0 50% / 100% 2px no-repeat; }
.status input::-webkit-slider-thumb { appearance: none; width: 8px; height: 20px; background: #222; border-radius: 2px; }

/* icon rail */
.rail { background: #e8e8e8; display: flex; flex-direction: column; align-items: center; gap: 8px; }
.rail button { width: 64px; height: 56px; }
.rail .fold { height: 50px; }
.rail .on { background: #f4f4f6; }
.rail svg { fill: none; stroke: #919191; stroke-width: 3; }
.rail .fold svg { stroke: none; }

/* widget settings */
.side { min-width: 0; }
.side h2 { height: 54px; border-bottom: 2px solid #d9d9dc; padding: 11px 20px 0; font-size: 24px; }
.sidetools { display: flex; gap: 20px; padding: 10px 0 8px 14px; margin: 0 14px 0 20px; border-bottom: 2px solid #e4e4e7; }
.tree { height: 366px; padding: 14px 0 0 30px; line-height: 36px; }
.root { display: flex; align-items: center; gap: 8px; height: 36px; }
.root span { background: #419bf9; color: #fff; height: 36px; padding: 0 8px 0 3px; }
.tree ul { list-style: none; margin-left: 14px; }
.tree li { display: flex; align-items: center; gap: 8px; height: 36px; padding-left: 26px; position: relative; }
.tree li::before { content: ""; position: absolute; left: 0; top: 0; width: 20px; height: 18px; border: solid #ebebee; border-width: 0 0 2px 2px; }
.tree li:not(:last-child)::after { content: ""; position: absolute; left: 0; top: 18px; width: 2px; height: 18px; background: #ebebee; }
.tabs { display: grid; grid-template-columns: 290px 1fr 1fr; height: 48px; background: #d9dadd; }
.tabs button { padding-top: 2px; }
.tabs .on { background: #efeff1; }
.form { padding: 20px 18px 0 20px; display: flex; flex-direction: column; }
.form h3 { height: 40px; background: #ececec; padding: 0 12px 0 10px; font-size: 24px; line-height: 34px; display: flex; justify-content: space-between; margin-bottom: 20px; }
.form h3 svg { margin-top: 19px; }
.row { display: grid; align-items: center; height: 40px; padding-left: 10px; margin-bottom: 20px; line-height: 40px; white-space: nowrap; }
.row > input { height: 39px; width: 100%; min-width: 0; border: 2px solid #dcdcdf; background: #fff; padding: 0 6px; line-height: 32px; }
.w1 { grid-template-columns: 204px 1fr; }
.w2 { grid-template-columns: 186px 1fr 43px; }
.wide { grid-column: 2 / 4; }
.w3 { grid-template-columns: 200px 1fr 26px; }
.more { width: 41px; height: 40px; background: #d9dadd; gap: 4px; }
.more i { width: 4px; height: 4px; background: #777; }
.check { display: flex; align-items: center; gap: 8px; padding-left: 18px; height: 26px; margin: 10px 0 30px; white-space: nowrap; }
.check input { appearance: none; width: 26px; height: 26px; border: 2px solid #a9a9a9; background: #f8f8f8; }
.check input:checked { border: 0; background: #3394f4; display: grid; place-items: center; }
.check input:checked::after { content: ""; width: 8px; height: 16px; border: solid #fff; border-width: 0 3px 3px 0; transform: rotate(40deg); margin-top: -4px; }
.pos { height: 44px; margin-bottom: 50px; }
.seg { grid-column: 2 / 4; display: grid; grid-template-columns: repeat(3, 1fr); height: 44px; border: 2px solid #d9d9dd; background: #fff; padding-left: 2px; }
.seg label { display: grid; place-items: center; position: relative; }
.seg input { appearance: none; position: absolute; inset: 0; }
.seg input:checked { background: #419bf9; }
.seg svg { position: relative; stroke: #333; stroke-width: 2; }
.spin { height: 40px; background: #d9dadd; display: grid; }
.spin path { fill: none; stroke: #333; stroke-width: 2; }
```
